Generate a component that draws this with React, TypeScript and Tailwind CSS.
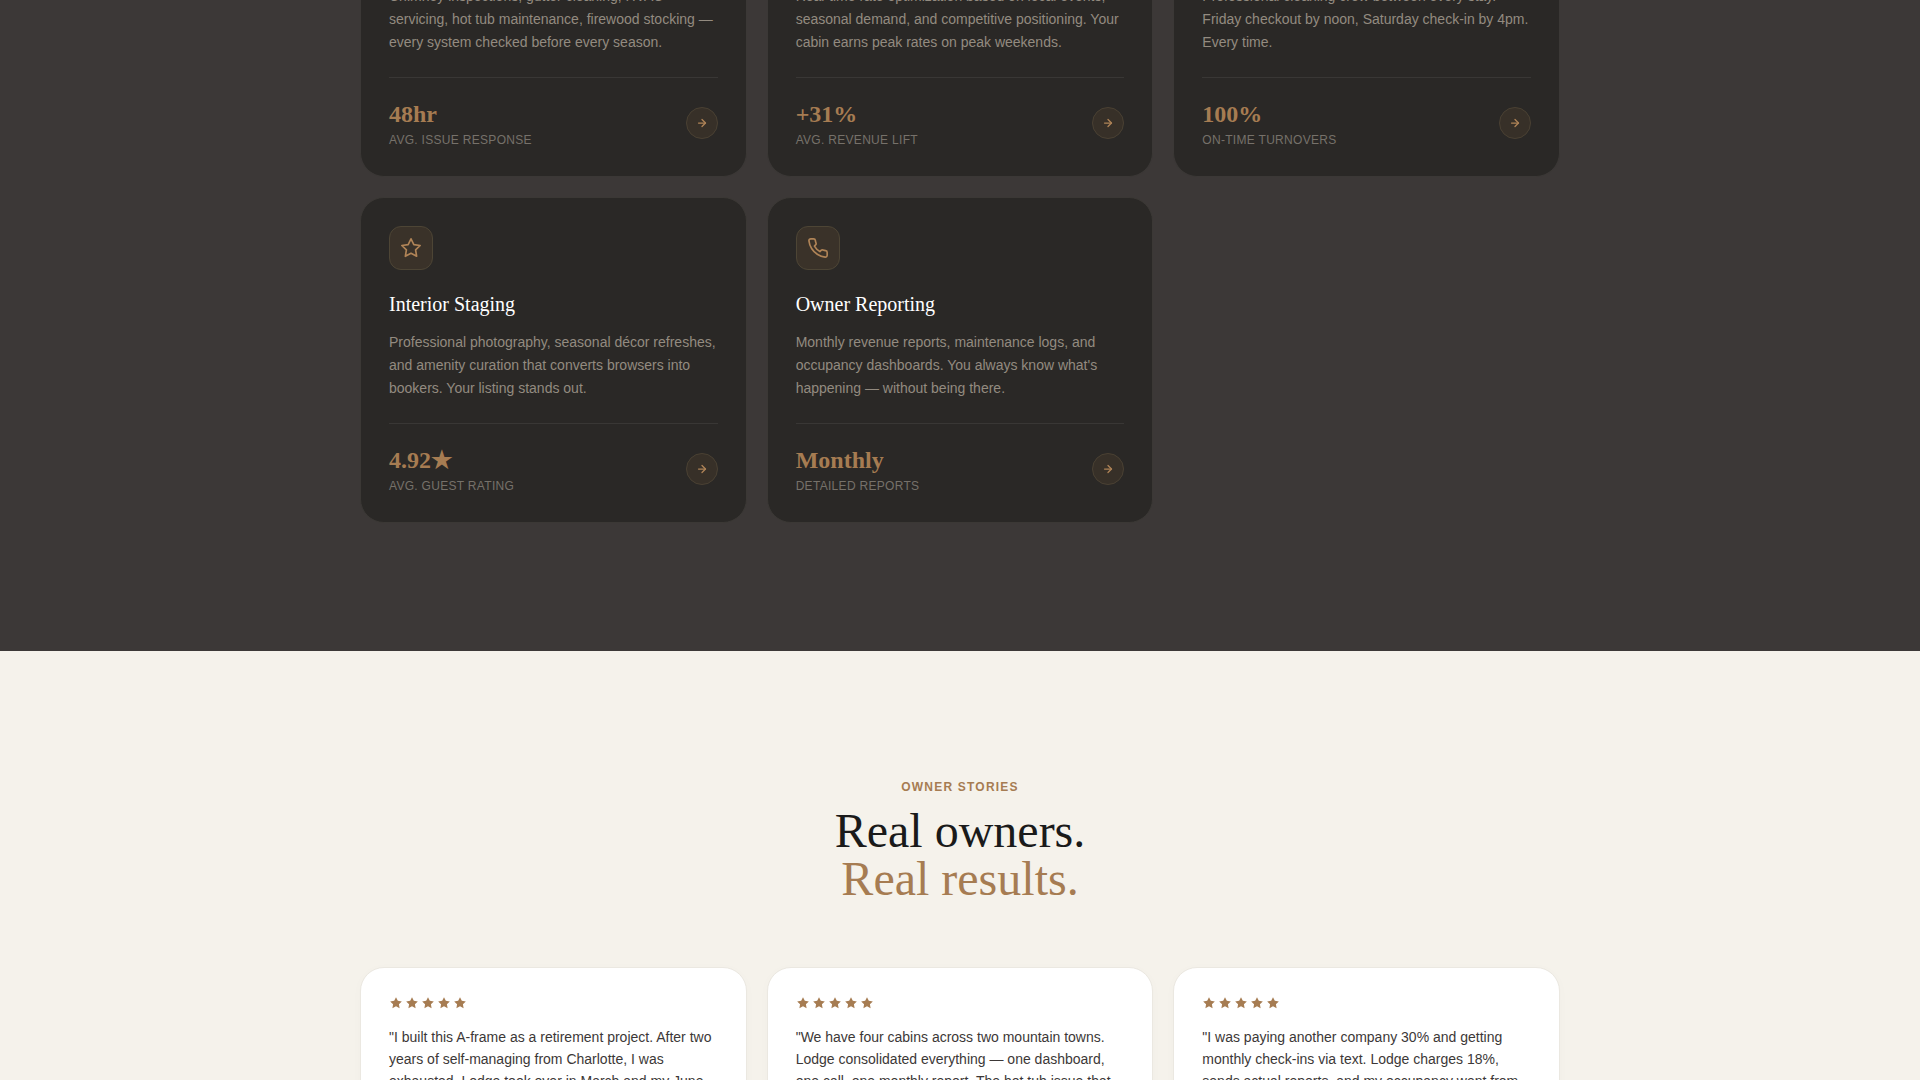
import React from "react";
import { ArrowRight } from "lucide-react";

interface Service {
  icon?: React.ReactNode;
  title?: string;
  description: string;
  stat: string;
  label: string;
}

const topServices: Service[] = [
  {
    description:
      "Chimney inspections, gutter cleaning, HVAC servicing, hot tub maintenance, firewood stocking — every system checked before every season.",
    stat: "48hr",
    label: "Avg. issue response",
  },
  {
    description:
      "Real-time rate optimization based on local events, seasonal demand, and competitive positioning. Your cabin earns peak rates on peak weekends.",
    stat: "+31%",
    label: "Avg. revenue lift",
  },
  {
    description:
      "Professional cleaning crew between every stay. Friday checkout by noon, Saturday check-in by 4pm. Every time.",
    stat: "100%",
    label: "On-time turnovers",
  },
];

const services: Service[] = [
  {
    icon: (
      <polygon points="12 2 15.09 8.26 22 9.27 17 14.14 18.18 21.02 12 17.77 5.82 21.02 7 14.14 2 9.27 8.91 8.26 12 2" />
    ),
    title: "Interior Staging",
    description:
      "Professional photography, seasonal décor refreshes, and amenity curation that converts browsers into bookers. Your listing stands out.",
    stat: "4.92★",
    label: "Avg. guest rating",
  },
  {
    icon: (
      <path d="M22 16.92v3a2 2 0 0 1-2.18 2 19.79 19.79 0 0 1-8.63-3.07 19.5 19.5 0 0 1-6-6 19.79 19.79 0 0 1-3.07-8.67A2 2 0 0 1 4.11 2h3a2 2 0 0 1 2 1.72 12.84 12.84 0 0 0 .7 2.81 2 2 0 0 1-.45 2.11L8.09 9.91a16 16 0 0 0 6 6l1.27-1.27a2 2 0 0 1 2.11-.45 12.84 12.84 0 0 0 2.81.7A2 2 0 0 1 22 16.92z" />
    ),
    title: "Owner Reporting",
    description:
      "Monthly revenue reports, maintenance logs, and occupancy dashboards. You always know what's happening — without being there.",
    stat: "Monthly",
    label: "Detailed reports",
  },
];

const stories = [
  "\"I built this A-frame as a retirement project. After two years of self-managing from Charlotte, I was exhausted. Lodge took over in March and my June",
  "\"We have four cabins across two mountain towns. Lodge consolidated everything — one dashboard, one call, one monthly report. The hot tub issue that",
  "\"I was paying another company 30% and getting monthly check-ins via text. Lodge charges 18%, sends actual reports, and my occupancy went from",
];

const ServiceBody: React.FC<{ service: Service }> = ({ service }) => {
  return (
    <>
      <p className="text-sm leading-[23px] text-[#938b80]">
        {service.description}
      </p>
      <div className="mt-[23px] pt-5 border-t border-[#393735] flex items-center justify-between">
        <div>
          <div className="font-['Liberation_Serif',serif] font-bold text-2xl leading-8 text-[#a67c52]">
            {service.stat}
          </div>
          <div className="mt-0.5 text-xs leading-4 tracking-wide uppercase text-[#76716a]">
            {service.label}
          </div>
        </div>
        <button
          type="button"
          aria-label={service.label}
          className="size-8 rounded-full border border-[#4a4133] bg-[#373028] text-[#b08457] flex items-center justify-center"
        >
          <ArrowRight size={12} strokeWidth={2.5} />
        </button>
      </div>
    </>
  );
};

const ServiceCard: React.FC<{ service: Service }> = ({ service }) => {
  return (
    <article className="rounded-3xl border border-[#3b3835] bg-[#2a2826] p-7">
      <div className="size-11 rounded-xl border border-[#4d4535] bg-[#3a3229] text-[#b08457] flex items-center justify-center">
        <svg
          viewBox="0 0 24 24"
          fill="none"
          stroke="currentColor"
          strokeWidth={1.8}
          strokeLinecap="round"
          strokeLinejoin="round"
          className="size-[22px]"
        >
          {service.icon}
        </svg>
      </div>
      <h3 className="mt-5 mb-3 font-['Liberation_Serif',serif] text-xl leading-[29px] text-white">
        {service.title}
      </h3>
      <ServiceBody service={service} />
    </article>
  );
};

const Stars = () => {
  return (
    <div className="flex gap-0.5 text-[#a67c52]">
      {[0, 1, 2, 3, 4].map((i) => (
        <svg key={i} viewBox="0 0 24 24" fill="currentColor" className="size-3.5">
          <path d="M12 2l3.09 6.26L22 9.27l-5 4.87 1.18 6.88L12 17.77l-6.18 3.25L7 14.14 2 9.27l6.91-1.01L12 2z" />
        </svg>
      ))}
    </div>
  );
};

const App = () => {
  return (
    <main className="h-screen overflow-hidden bg-[#f5f2eb] font-['Liberation_Sans',sans-serif]">
      <section className="overflow-hidden bg-[#3c3837] pb-32">
        <div className="max-w-[1200px] mx-auto">
          {/* continues from above the fold */}
          <div className="grid grid-cols-3 gap-5 -mt-[15px]">
            {topServices.map((service) => (
              <article
                key={service.label}
                className="rounded-b-3xl border border-t-0 border-[#3b3836] bg-[#2a2826] px-7 pb-7"
              >
                <ServiceBody service={service} />
              </article>
            ))}
          </div>
          <div className="mt-5 grid grid-cols-3 gap-5">
            {services.map((service) => (
              <ServiceCard key={service.label} service={service} />
            ))}
          </div>
        </div>
      </section>

      <section className="pt-32">
        <div className="max-w-[1200px] mx-auto">
          <div className="text-center">
            <div className="text-xs leading-4 font-bold tracking-widest uppercase text-[#a67c52]">
              Owner Stories
            </div>
            <h2 className="mt-3 font-['Liberation_Serif',serif] text-5xl leading-12 text-[#1a1a1a]">
              Real owners.
              <br />
              <span className="text-[#a67c52]">Real results.</span>
            </h2>
          </div>
          <div className="mt-16 grid grid-cols-3 gap-5">
            {stories.map((story) => (
              <article
                key={story}
                className="rounded-3xl border border-[#ebe8e1] bg-white p-7 shadow-[0_2px_12px_rgba(0,0,0,0.02)]"
              >
                <Stars />
                <p className="mt-4 text-sm leading-[22px] text-[#3c3837]">
                  {story}
                </p>
              </article>
            ))}
          </div>
        </div>
      </section>
    </main>
  );
};

export default App;
